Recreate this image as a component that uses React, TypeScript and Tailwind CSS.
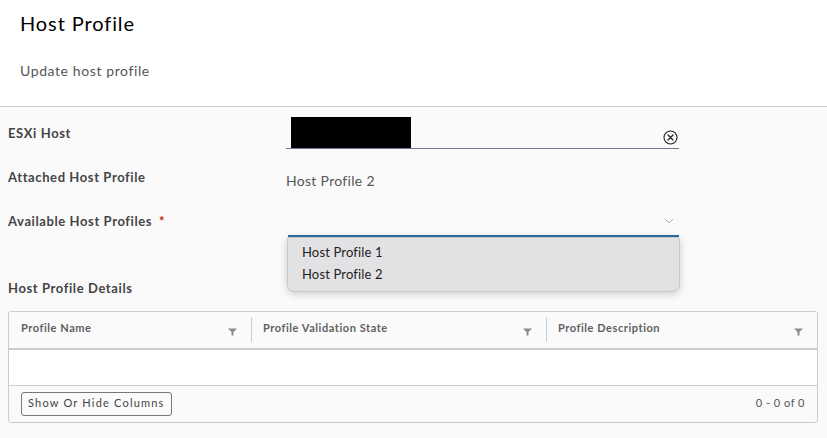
import React from 'react';

const font = { fontFamily: 'Lato, "Open Sans", sans-serif' };

function FilterIcon() {
  return (
    <svg width="9" height="8" viewBox="0 0 9 8" className="shrink-0">
      <path d="M0 0.5 H9 L5.5 4 V7.5 H3.5 V4 Z" fill="#8c8c8c" />
    </svg>
  );
}

function ClearIcon() {
  return (
    <svg width="15" height="15" viewBox="0 0 15 15">
      <circle cx="7.5" cy="7.5" r="6.5" fill="none" stroke="#222" strokeWidth="1.1" />
      <path d="M5 5 L10 10 M10 5 L5 10" stroke="#222" strokeWidth="1.2" strokeLinecap="round" />
    </svg>
  );
}

function Chevron() {
  return (
    <svg width="10" height="6" viewBox="0 0 10 6">
      <path d="M1 1 L5 5 L9 1" fill="none" stroke="#b0b0b0" strokeWidth="1" />
    </svg>
  );
}

const columns = ['Profile Name', 'Profile Validation State', 'Profile Description'];

export default function App() {
  return (
    <div className="w-[827px] h-[438px] bg-[#fafafa] overflow-hidden text-[#333]" style={font}>
      <div className="bg-white px-5 pt-[9px] h-[107px] border-b border-[#cccccc]">
        <h1 className="text-[20px] leading-[28px] font-normal tracking-[0.9px] text-black">Host Profile</h1>
        <p className="mt-[25px] text-[14px] leading-[18px] tracking-[0.6px] text-[#565656]">Update host profile</p>
      </div>

      <div className="pl-2 pr-[9px]">
        <div className="grid grid-cols-[278px_393px] mt-[9px]">
          <div className="text-[13px] font-bold tracking-[0.6px] text-[#454545] pt-[8px]">ESXi Host</div>
          <div className="relative h-[33px] border-b border-[#6a7888] flex items-end justify-end">
            <div className="absolute left-[5px] top-[1px] w-[120px] h-[31px] bg-black" />
            <div className="mb-[3px] mr-[1px]"><ClearIcon /></div>
          </div>

          <div className="text-[13px] font-bold tracking-[0.6px] text-[#454545] pt-[19px]">Attached Host Profile</div>
          <div className="text-[14px] tracking-[0.3px] text-[#565656] pt-[21px]">Host Profile 2</div>

          <div className="text-[13px] font-bold tracking-[0.6px] text-[#454545] pt-[21px]">
            Available Host Profiles <span className="text-[#c92100] ml-[3px]">*</span>
          </div>
          <div className="relative mt-[26px] ml-[2px] h-[20px] border-b-2 border-[#2f6d9e] flex justify-end items-start">
            <div className="mr-[5px] mt-[1px]"><Chevron /></div>
            <div className="absolute left-[-1px] top-[20px] w-[393px] h-[55px] bg-[#e2e2e4] rounded-b-[7px] rounded-t-[2px] border border-[#c8c8c8] shadow-[0_2px_8px_rgba(0,0,0,0.18)] pt-[3px] pl-[14px] text-[13px] tracking-[0.15px] text-[#1d1d1d] z-10">
              <div className="leading-[22px]">Host Profile 1</div>
              <div className="leading-[22px]">Host Profile 2</div>
            </div>
          </div>
        </div>

        <div className="text-[13px] font-bold tracking-[0.6px] text-[#454545] mt-[42px]">Host Profile Details</div>

        <div className="mt-[12px] border border-[#cccccc] rounded-[3px] overflow-hidden">
          <div className="grid grid-cols-[242px_295px_1fr] h-[38px] border-b-2 border-[#cccccc] bg-[#fafafa]">
            {columns.map((c, i) => (
              <div key={c} className="flex items-center">
                {i > 0 && <div className="w-px h-[25px] bg-[#cccccc] shrink-0" />}
                <div className={`flex-1 flex items-center justify-between ${i > 0 ? 'pl-[11px]' : 'pl-[12px]'} pr-[14px]`}>
                  <span className="text-[11px] font-bold tracking-[0.55px] text-[#606060] -mt-[3px]">{c}</span>
                  <div className="mt-[4px]"><FilterIcon /></div>
                </div>
              </div>
            ))}
          </div>
          <div className="h-[36px] bg-white border-b border-[#cccccc]" />
          <div className="h-[36px] flex items-center justify-between pl-[12px] pr-[12px]">
            <button className="h-[24px] px-[6px] border border-[#777] rounded-[3px] text-[11px] tracking-[1.2px] text-[#444] bg-[#fafafa]">
              Show Or Hide Columns
            </button>
            <span className="text-[11px] tracking-[0.5px] text-[#565656]">0 - 0 of 0</span>
          </div>
        </div>
      </div>
    </div>
  );
}
